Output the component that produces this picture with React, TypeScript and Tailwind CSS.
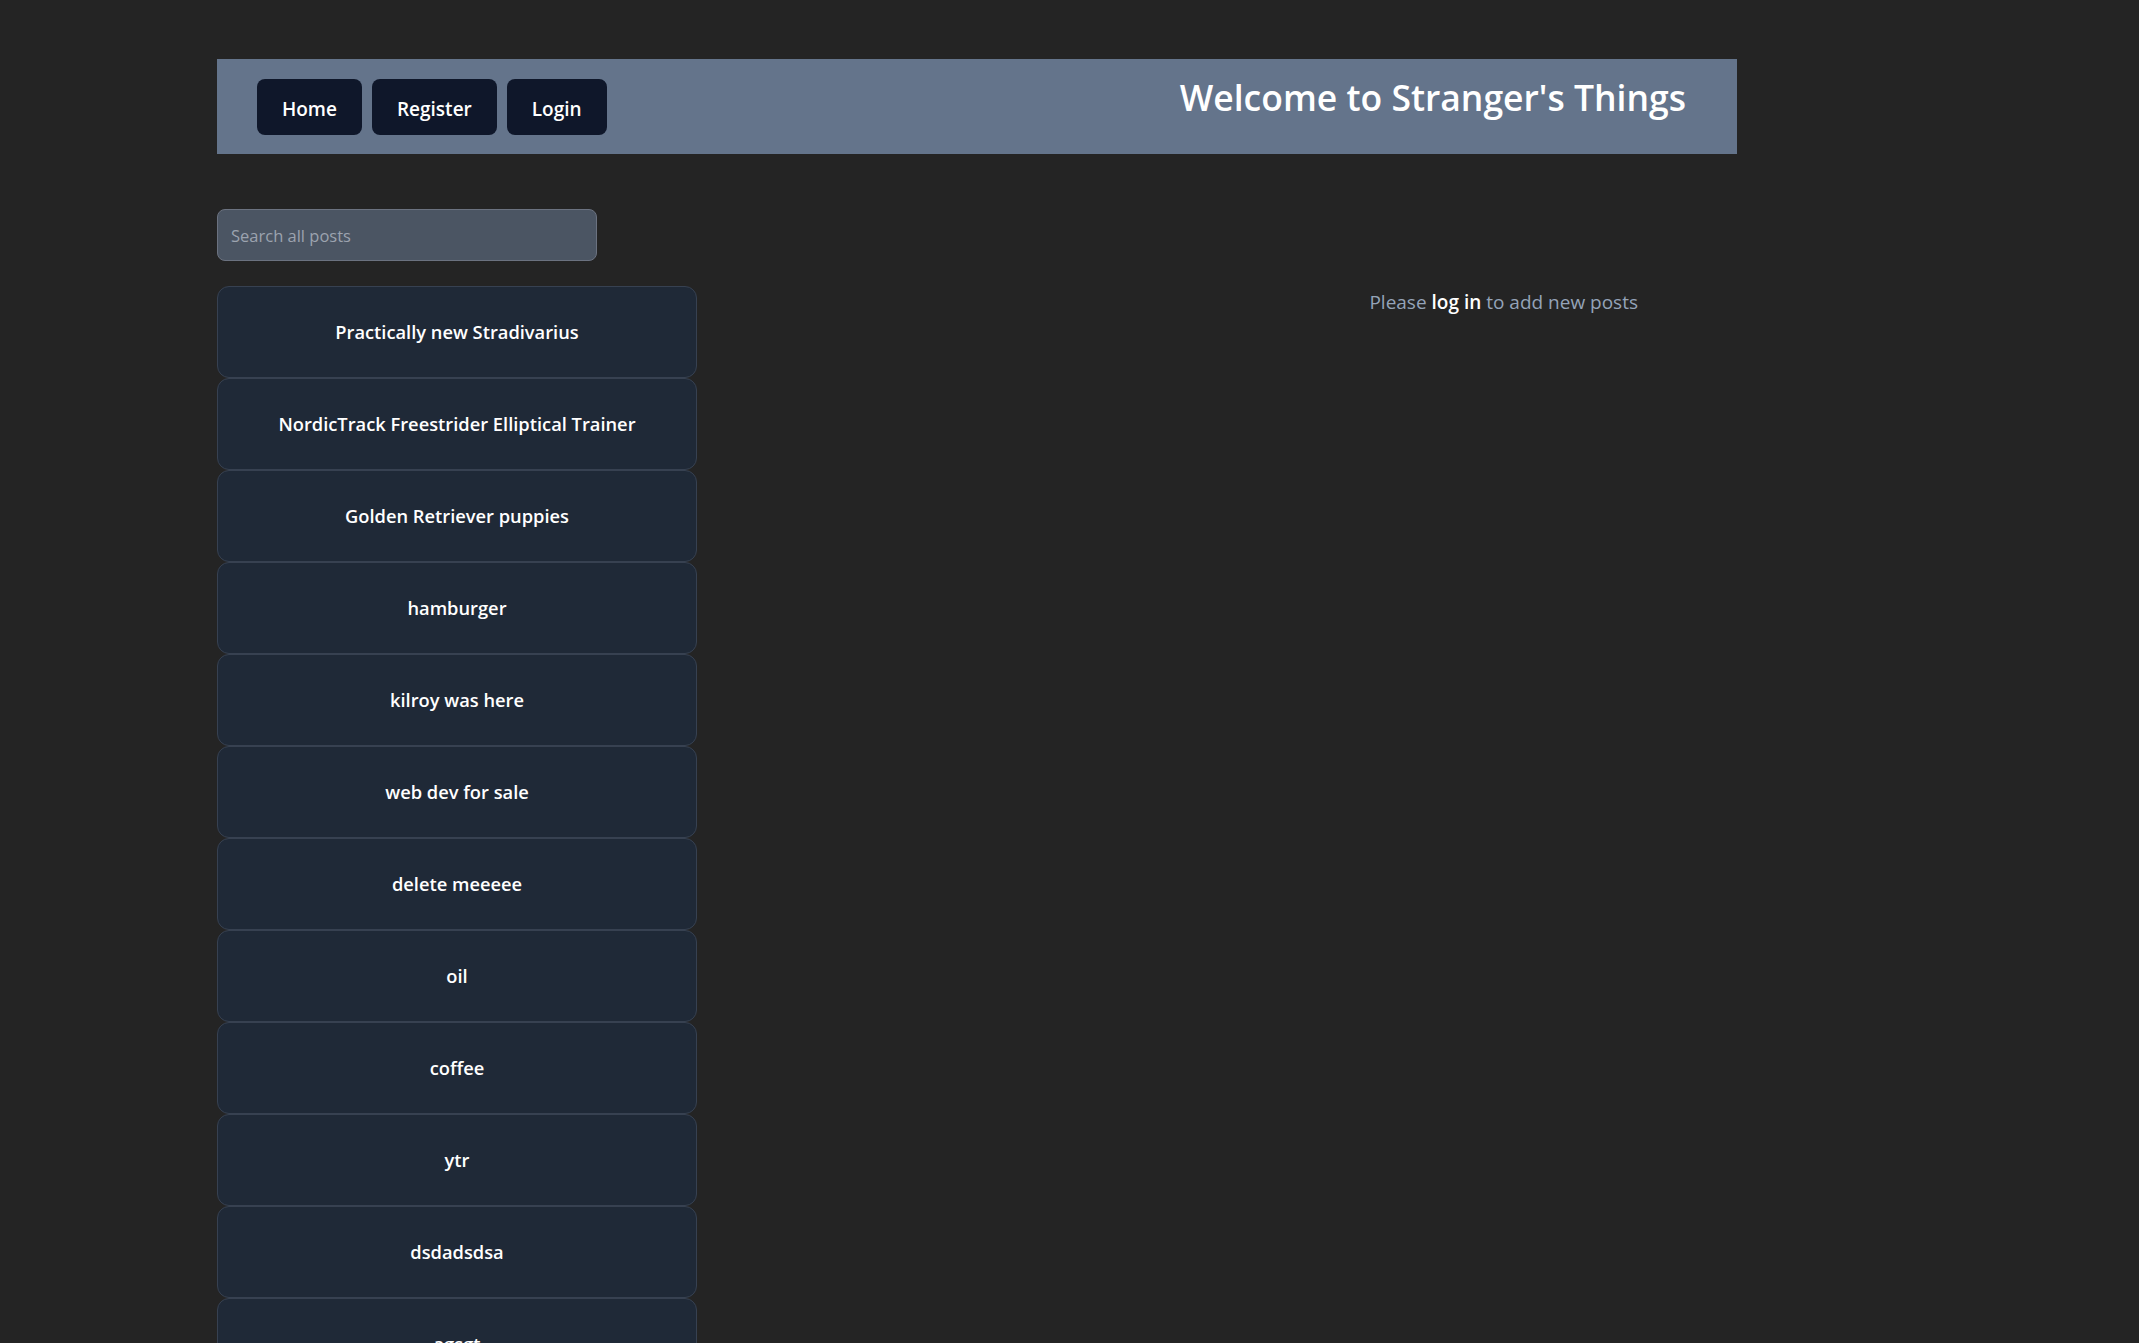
const posts = [
  'Practically new Stradivarius',
  'NordicTrack Freestrider Elliptical Trainer',
  'Golden Retriever puppies',
  'hamburger',
  'kilroy was here',
  'web dev for sale',
  'delete meeeee',
  'oil',
  'coffee',
  'ytr',
  'dsdadsdsa',
  'agsgt',
];

function NavButton({ label }: { label: string }) {
  return (
    <button className="h-14 px-[25px] pt-[5px] rounded-lg bg-[#0f172a] text-white text-[19px] font-semibold">
      {label}
    </button>
  );
}

export default function App() {
  return (
    <div
      className="min-h-screen bg-[#242424] pl-[217px] pt-[59px]"
      style={{ fontFamily: '"Open Sans", "Noto Sans", sans-serif' }}
    >
      <div className="w-[1520px]">
        {/* header */}
        <header className="h-[95px] bg-[#64748b] flex items-center justify-between pl-10 pr-[51px]">
          <nav className="flex gap-[10px]">
            <NavButton label="Home" />
            <NavButton label="Register" />
            <NavButton label="Login" />
          </nav>
          <h1 className="text-white text-[35.5px] font-semibold -mt-[18px]">Welcome to Stranger's Things</h1>
        </header>

        <main className="flex mt-[55px]">
          <div className="w-[480px]">
            <input
              type="text"
              placeholder="Search all posts"
              className="w-[380px] h-[52px] rounded-lg bg-[#4b5563] border border-[#6b7280] px-[13px] text-[16.5px] text-white placeholder:text-[#9ca3af] outline-none"
            />
            <div className="mt-[25px] flex flex-col">
              {posts.map((p) => (
                <div
                  key={p}
                  className="h-[92px] rounded-xl bg-[#1f2937] border border-[#374151] flex items-center justify-center text-white text-[18.3px] font-semibold"
                >
                  {p}
                </div>
              ))}
            </div>
          </div>

          <div className="flex-1 flex justify-end pr-[99px] pt-[79px]">
            <p className="text-[19px] leading-7 text-[#94a3b8] h-7">
              Please <span className="text-white font-semibold">log in</span> to add new posts
            </p>
          </div>
        </main>
      </div>
    </div>
  );
}
